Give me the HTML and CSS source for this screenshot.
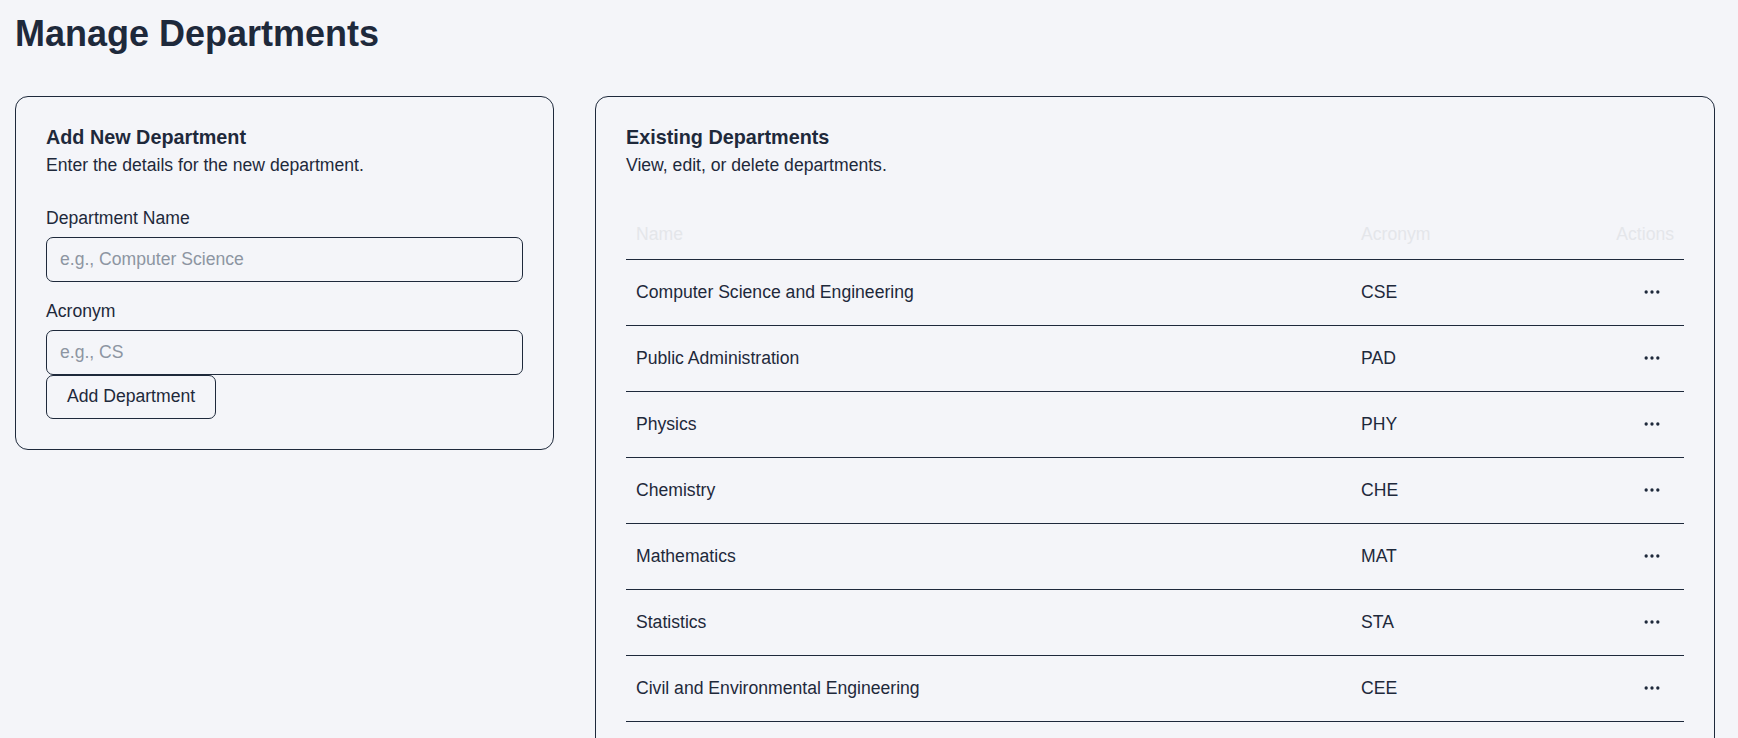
FILE: index.html
```html
<!DOCTYPE html>
<html lang="en">
<head>
<meta charset="utf-8">
<title>Manage Departments</title>
<link rel="stylesheet" href="styles.css">
</head>
<body>
<main class="page">
  <h1 class="page-title">Manage Departments</h1>
  <div class="layout">
    <section class="card card-form">
      <div class="card-header">
        <h2 class="card-title">Add New Department</h2>
        <p class="card-desc">Enter the details for the new department.</p>
      </div>
      <form class="form">
        <div class="field">
          <label class="label" for="dept-name">Department Name</label>
          <input class="input" id="dept-name" type="text" placeholder="e.g., Computer Science">
        </div>
        <div class="field field-last">
          <label class="label" for="dept-acr">Acronym</label>
          <input class="input" id="dept-acr" type="text" placeholder="e.g., CS">
        </div>
        <button class="btn" type="button">Add Department</button>
      </form>
    </section>

    <section class="card card-list">
      <div class="card-header">
        <h2 class="card-title">Existing Departments</h2>
        <p class="card-desc">View, edit, or delete departments.</p>
      </div>
      <table class="table">
        <colgroup>
          <col class="col-name">
          <col class="col-acr">
          <col class="col-act">
        </colgroup>
        <thead>
          <tr>
            <th class="th">Name</th>
            <th class="th">Acronym</th>
            <th class="th th-right">Actions</th>
          </tr>
        </thead>
        <tbody>
          <tr><td class="td">Computer Science and Engineering</td><td class="td">CSE</td><td class="td td-right"><button class="icon-btn" type="button" aria-label="Actions"><svg width="20" height="20" viewBox="0 0 24 24" fill="none" stroke="currentColor" stroke-width="2"><circle cx="5" cy="12" r="1"/><circle cx="12" cy="12" r="1"/><circle cx="19" cy="12" r="1"/></svg></button></td></tr>
          <tr><td class="td">Public Administration</td><td class="td">PAD</td><td class="td td-right"><button class="icon-btn" type="button" aria-label="Actions"><svg width="20" height="20" viewBox="0 0 24 24" fill="none" stroke="currentColor" stroke-width="2"><circle cx="5" cy="12" r="1"/><circle cx="12" cy="12" r="1"/><circle cx="19" cy="12" r="1"/></svg></button></td></tr>
          <tr><td class="td">Physics</td><td class="td">PHY</td><td class="td td-right"><button class="icon-btn" type="button" aria-label="Actions"><svg width="20" height="20" viewBox="0 0 24 24" fill="none" stroke="currentColor" stroke-width="2"><circle cx="5" cy="12" r="1"/><circle cx="12" cy="12" r="1"/><circle cx="19" cy="12" r="1"/></svg></button></td></tr>
          <tr><td class="td">Chemistry</td><td class="td">CHE</td><td class="td td-right"><button class="icon-btn" type="button" aria-label="Actions"><svg width="20" height="20" viewBox="0 0 24 24" fill="none" stroke="currentColor" stroke-width="2"><circle cx="5" cy="12" r="1"/><circle cx="12" cy="12" r="1"/><circle cx="19" cy="12" r="1"/></svg></button></td></tr>
          <tr><td class="td">Mathematics</td><td class="td">MAT</td><td class="td td-right"><button class="icon-btn" type="button" aria-label="Actions"><svg width="20" height="20" viewBox="0 0 24 24" fill="none" stroke="currentColor" stroke-width="2"><circle cx="5" cy="12" r="1"/><circle cx="12" cy="12" r="1"/><circle cx="19" cy="12" r="1"/></svg></button></td></tr>
          <tr><td class="td">Statistics</td><td class="td">STA</td><td class="td td-right"><button class="icon-btn" type="button" aria-label="Actions"><svg width="20" height="20" viewBox="0 0 24 24" fill="none" stroke="currentColor" stroke-width="2"><circle cx="5" cy="12" r="1"/><circle cx="12" cy="12" r="1"/><circle cx="19" cy="12" r="1"/></svg></button></td></tr>
          <tr><td class="td">Civil and Environmental Engineering</td><td class="td">CEE</td><td class="td td-right"><button class="icon-btn" type="button" aria-label="Actions"><svg width="20" height="20" viewBox="0 0 24 24" fill="none" stroke="currentColor" stroke-width="2"><circle cx="5" cy="12" r="1"/><circle cx="12" cy="12" r="1"/><circle cx="19" cy="12" r="1"/></svg></button></td></tr>
        </tbody>
      </table>
    </section>
  </div>
</main>
</body>
</html>
```
FILE: styles.css
```css
* { box-sizing: border-box; }

html, body {
  margin: 0;
  padding: 0;
  overflow: hidden;
}

body {
  background: #f4f5f9;
  color: #1e293b;
  font-family: "Liberation Sans", Arial, sans-serif;
  font-size: 17.6px;
  line-height: 26.4px;
}

.page {
  padding: 14px 23px 0 15px;
}

.page-title {
  margin: 0;
  font-size: 36px;
  line-height: 40px;
  font-weight: 700;
  color: #1e293b;
}

.layout {
  margin-top: 42px;
  display: grid;
  grid-template-columns: 539px 1120px;
  column-gap: 41px;
  align-items: start;
}

.card {
  border: 1px solid #1e293b;
  border-radius: 13px;
  padding: 29px 30px 30px 30px;
  background: #f4f5f9;
}

.card-title {
  margin: 0;
  font-size: 19.8px;
  line-height: 22px;
  font-weight: 700;
  color: #1e293b;
}

.card-desc {
  margin: 4px 0 0 0;
  font-size: 17.6px;
  line-height: 26.4px;
  color: #1e293b;
}

.form {
  margin-top: 26.5px;
  display: flex;
  flex-direction: column;
  align-items: flex-start;
}

.field {
  display: flex;
  flex-direction: column;
  gap: 6px;
  width: 100%;
  margin-bottom: 16px;
}

.field-last {
  margin-bottom: 0;
}

.label {
  font-size: 17.6px;
  line-height: 26.4px;
  color: #1e293b;
}

.input {
  width: 100%;
  height: 44.4px;
  border: 1px solid #1e293b;
  border-radius: 7px;
  background: transparent;
  padding: 0 13px;
  font-family: "Liberation Sans", Arial, sans-serif;
  font-size: 17.6px;
  color: #1e293b;
  outline: none;
}

.input::placeholder {
  color: #8d95a2;
}

.btn {
  height: 44.4px;
  padding: 0 20px;
  border: 1px solid #1e293b;
  border-radius: 7px;
  background: transparent;
  font-family: "Liberation Sans", Arial, sans-serif;
  font-size: 17.6px;
  color: #1e293b;
  cursor: pointer;
}

.table {
  margin-top: 28px;
  width: 100%;
  border-collapse: collapse;
  table-layout: fixed;
}

.col-name { width: 725px; }
.col-acr { width: 210px; }

.th {
  height: 53px;
  padding: 4px 10px 0 10px;
  text-align: left;
  font-weight: 400;
  font-size: 17.6px;
  color: #e4e6ea;
  border-bottom: 1px solid #1e293b;
  vertical-align: middle;
}

.th-right { text-align: right; }

.td {
  height: 66px;
  padding: 0 10px;
  font-size: 17.6px;
  color: #1e293b;
  border-bottom: 1px solid #1e293b;
  vertical-align: middle;
}

.td-right { text-align: right; }

.icon-btn {
  display: inline-flex;
  align-items: center;
  justify-content: center;
  width: 44px;
  height: 44px;
  padding: 0;
  border: none;
  background: transparent;
  color: #1e293b;
  vertical-align: middle;
  cursor: pointer;
}
```
